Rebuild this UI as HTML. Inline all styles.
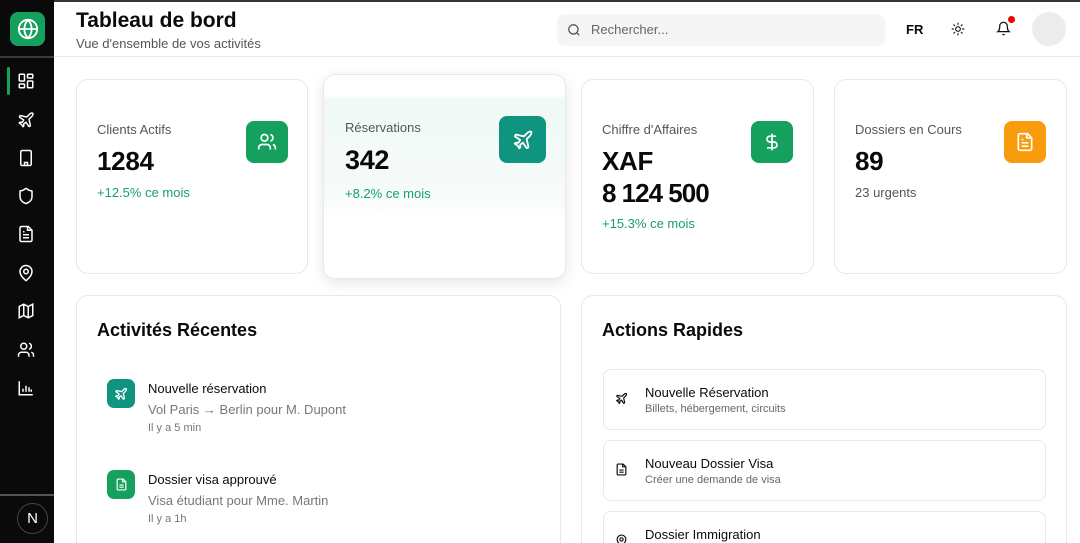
<!DOCTYPE html>
<html style="width:1080px;height:543px;overflow:hidden"><head><meta charset="utf-8"><style>
*{box-sizing:border-box;margin:0;padding:0}
body{width:1080px;height:543px;overflow:hidden;background:#fff;font-family:"Liberation Sans",sans-serif;color:#0a0a0a;position:relative}
.abs{position:absolute}
.side{left:0;top:0;width:54px;height:543px;background:#0a0a0a}
.ic{position:absolute;left:17px;width:18px;height:18px}
svg{display:block}
.card{position:absolute;background:#fff;border:1px solid #e8e8e8;border-radius:12px}
.lbl{position:absolute;font-size:13px;color:#555}
.num{position:absolute;font-size:26px;font-weight:bold;color:#0a0a0a;line-height:32px;letter-spacing:-0.3px}
.chg{position:absolute;font-size:13px;color:#16a06a}
.ibox{position:absolute;width:42px;height:42px;border-radius:8px;display:flex;align-items:center;justify-content:center}
.qa{position:absolute;left:21px;width:443px;height:61px;border:1px solid #e8e8e8;border-radius:8px}
.qa .t{position:absolute;left:41px;top:15px;font-size:13px}
.qa .s{position:absolute;left:41px;top:33px;font-size:11px;color:#666}
.qa svg{position:absolute;left:11px;top:22px}
.bot{height:248px;overflow:hidden;border-bottom:none;border-radius:12px 12px 0 0}
</style></head><body>
<div class="abs" style="left:0;top:0;width:1080px;height:2px;background:#333"></div>
<div class="abs side">
 <div class="abs" style="left:10px;top:12px;width:35px;height:34px;background:#16a05e;border-radius:8px;display:flex;align-items:center;justify-content:center">
  <svg width="22" height="22" viewBox="0 0 24 24" fill="none" stroke="#fff" stroke-width="2" stroke-linecap="round"><circle cx="12" cy="12" r="10"/><path d="M12 2a14.5 14.5 0 0 0 0 20 14.5 14.5 0 0 0 0-20M2 12h20"/></svg>
 </div>
 <div class="abs" style="left:0;top:56px;width:54px;height:2px;background:#3a3a3a"></div>
 <div class="abs" style="left:7px;top:67px;width:3px;height:28px;background:#16a05e;border-radius:2px"></div>
 <svg class="ic" style="top:72px" viewBox="0 0 24 24" fill="none" stroke="#fff" stroke-width="2"><rect x="3" y="3" width="7" height="9" rx="1"/><rect x="14" y="3" width="7" height="5" rx="1"/><rect x="14" y="12" width="7" height="9" rx="1"/><rect x="3" y="16" width="7" height="5" rx="1"/></svg>
 <svg class="ic" style="top:111px" viewBox="0 0 24 24" fill="none" stroke="#fff" stroke-width="2" stroke-linejoin="round"><path d="M17.8 19.2 16 11l3.5-3.5C21 6 21.5 4 21 3c-1-.5-3 0-4.5 1.5L13 8 4.8 6.2c-.5-.1-.9.1-1.1.5l-.3.5c-.2.5-.1 1 .3 1.3L9 12l-2 3H4l-1 1 3 2 2 3 1-1v-3l3-2 3.5 5.3c.3.4.8.5 1.3.3l.5-.2c.4-.3.6-.7.5-1.2z"/></svg>
 <svg class="ic" style="top:149px" viewBox="0 0 24 24" fill="none" stroke="#fff" stroke-width="2"><rect x="5" y="2" width="14" height="20" rx="2"/><path d="M10 22v-4h4v4M9 6h.01M12 6h.01M15 6h.01M9 10h.01M12 10h.01M15 10h.01M9 14h.01M12 14h.01M15 14h.01"/></svg>
 <svg class="ic" style="top:187px" viewBox="0 0 24 24" fill="none" stroke="#fff" stroke-width="2"><path d="M20 13c0 5-3.5 7.5-7.7 9a1 1 0 0 1-.7 0C7.5 20.5 4 18 4 13V6a1 1 0 0 1 1-1c2 0 4.5-1.2 6.2-2.7a1.2 1.2 0 0 1 1.6 0C14.5 3.8 17 5 19 5a1 1 0 0 1 1 1z"/></svg>
 <svg class="ic" style="top:225px" viewBox="0 0 24 24" fill="none" stroke="#fff" stroke-width="2"><path d="M15 2H6a2 2 0 0 0-2 2v16a2 2 0 0 0 2 2h12a2 2 0 0 0 2-2V7z"/><path d="M14 2v5h5M10 9H8M16 13H8M16 17H8"/></svg>
 <svg class="ic" style="top:264px" viewBox="0 0 24 24" fill="none" stroke="#fff" stroke-width="2"><path d="M20 10c0 5-5.5 10.2-7.4 11.8a1 1 0 0 1-1.2 0C9.5 20.2 4 15 4 10a8 8 0 0 1 16 0"/><circle cx="12" cy="10" r="3"/></svg>
 <svg class="ic" style="top:302px" viewBox="0 0 24 24" fill="none" stroke="#fff" stroke-width="2"><path d="M3 6l6-3 6 3 6-3v15l-6 3-6-3-6 3zM9 3v15M15 6v15"/></svg>
 <svg class="ic" style="top:341px" viewBox="0 0 24 24" fill="none" stroke="#fff" stroke-width="2"><path d="M16 21v-2a4 4 0 0 0-4-4H6a4 4 0 0 0-4 4v2"/><circle cx="9" cy="7" r="4"/><path d="M22 21v-2a4 4 0 0 0-3-3.9M16 3.1a4 4 0 0 1 0 7.8"/></svg>
 <svg class="ic" style="top:379px" viewBox="0 0 24 24" fill="none" stroke="#fff" stroke-width="2"><path d="M3 3v18h18M8 17v-4M12 17V9M16 17v-6M19 17v-3"/></svg>
 <div class="abs" style="left:0;top:494px;width:54px;height:2px;background:#555"></div>
 <div class="abs" style="left:17px;top:503px;width:31px;height:31px;border-radius:50%;border:1px solid #444;color:#fff;font-size:15px;text-align:center;line-height:29px">N</div>
</div>
<div class="abs" style="left:54px;top:56px;width:1026px;height:1px;background:#e8e8e8"></div>
<div class="abs" style="left:76px;top:9px;font-size:21px;font-weight:bold">Tableau de bord</div>
<div class="abs" style="left:76px;top:36px;font-size:13px;color:#555">Vue d'ensemble de vos activités</div>
<div class="abs" style="left:557px;top:14px;width:328px;height:32px;background:#f5f5f5;border-radius:8px">
 <svg class="abs" style="left:10px;top:9px" width="14" height="14" viewBox="0 0 24 24" fill="none" stroke="#444" stroke-width="2"><circle cx="11" cy="11" r="8"/><path d="m21 21-4.3-4.3"/></svg>
 <div class="abs" style="left:34px;top:8px;font-size:13px;color:#666">Rechercher...</div>
</div>
<div class="abs" style="left:906px;top:22px;font-size:13px;font-weight:bold">FR</div>
<svg class="abs" style="left:951px;top:22px" width="14" height="14" viewBox="0 0 24 24" fill="none" stroke="#111" stroke-width="2" stroke-linecap="round"><circle cx="12" cy="12" r="4"/><path d="M12 2v2M12 20v2M4.9 4.9l1.4 1.4M17.7 17.7l1.4 1.4M2 12h2M20 12h2M6.3 17.7l-1.4 1.4M19.1 4.9l-1.4 1.4"/></svg>
<svg class="abs" style="left:996px;top:21px" width="15" height="15" viewBox="0 0 24 24" fill="none" stroke="#111" stroke-width="2"><path d="M6 8a6 6 0 0 1 12 0c0 7 3 9 3 9H3s3-2 3-9M10.3 21a1.9 1.9 0 0 0 3.4 0"/></svg>
<div class="abs" style="left:1008px;top:16px;width:7px;height:7px;border-radius:50%;background:#e00"></div>
<div class="abs" style="left:1032px;top:12px;width:34px;height:34px;border-radius:50%;background:#ececec"></div>

<div class="card" style="left:76px;top:79px;width:232px;height:195px">
 <div class="lbl" style="left:20px;top:42px">Clients Actifs</div>
 <div class="num" style="left:20px;top:65px">1284</div>
 <div class="chg" style="left:20px;top:105px">+12.5% ce mois</div>
 <div class="ibox" style="left:169px;top:41px;background:#16a05e"><svg width="20" height="20" viewBox="0 0 24 24" fill="none" stroke="#fff" stroke-width="2"><path d="M16 21v-2a4 4 0 0 0-4-4H6a4 4 0 0 0-4 4v2"/><circle cx="9" cy="7" r="4"/><path d="M22 21v-2a4 4 0 0 0-3-3.9M16 3.1a4 4 0 0 1 0 7.8"/></svg></div>
</div>
<div class="card" style="left:323px;top:74px;width:243px;height:205px;box-shadow:0 4px 14px rgba(0,0,0,.1);background:linear-gradient(180deg,#fff 10%,#f0f9f6 12%,#f6fbf9 60%,#fff 72%)">
 <div class="lbl" style="left:21px;top:45px">Réservations</div>
 <div class="num" style="left:21px;top:69px;font-size:27px">342</div>
 <div class="chg" style="left:21px;top:111px">+8.2% ce mois</div>
 <div class="ibox" style="left:175px;top:41px;width:47px;height:47px;background:#0f9480"><svg width="22" height="22" viewBox="0 0 24 24" fill="none" stroke="#fff" stroke-width="2" stroke-linejoin="round"><path d="M17.8 19.2 16 11l3.5-3.5C21 6 21.5 4 21 3c-1-.5-3 0-4.5 1.5L13 8 4.8 6.2c-.5-.1-.9.1-1.1.5l-.3.5c-.2.5-.1 1 .3 1.3L9 12l-2 3H4l-1 1 3 2 2 3 1-1v-3l3-2 3.5 5.3c.3.4.8.5 1.3.3l.5-.2c.4-.3.6-.7.5-1.2z"/></svg></div>
</div>
<div class="card" style="left:581px;top:79px;width:233px;height:195px">
 <div class="lbl" style="left:20px;top:42px">Chiffre d'Affaires</div>
 <div class="num" style="left:20px;top:65px">XAF<br><span style="letter-spacing:-1px">8 124 500</span></div>
 <div class="chg" style="left:20px;top:136px">+15.3% ce mois</div>
 <div class="ibox" style="left:169px;top:41px;background:#16a05e"><svg width="20" height="20" viewBox="0 0 24 24" fill="none" stroke="#fff" stroke-width="2"><path d="M12 2v20M17 5H9.5a3.5 3.5 0 0 0 0 7h5a3.5 3.5 0 0 1 0 7H6"/></svg></div>
</div>
<div class="card" style="left:834px;top:79px;width:233px;height:195px">
 <div class="lbl" style="left:20px;top:42px">Dossiers en Cours</div>
 <div class="num" style="left:20px;top:65px">89</div>
 <div class="lbl" style="left:20px;top:105px">23 urgents</div>
 <div class="ibox" style="left:169px;top:41px;background:#f89c0e"><svg width="20" height="20" viewBox="0 0 24 24" fill="none" stroke="#fff" stroke-width="2"><path d="M15 2H6a2 2 0 0 0-2 2v16a2 2 0 0 0 2 2h12a2 2 0 0 0 2-2V7z"/><path d="M14 2v5h5M10 9H8M16 13H8M16 17H8"/></svg></div>
</div>

<div class="card bot" style="left:76px;top:295px;width:485px">
 <div class="abs" style="left:20px;top:24px;font-size:18px;font-weight:bold">Activités Récentes</div>
 <div class="abs" style="left:30px;top:83px;width:28px;height:29px;border-radius:7px;background:#0f9480;display:flex;align-items:center;justify-content:center"><svg width="14" height="14" viewBox="0 0 24 24" fill="none" stroke="#fff" stroke-width="2.2" stroke-linejoin="round"><path d="M17.8 19.2 16 11l3.5-3.5C21 6 21.5 4 21 3c-1-.5-3 0-4.5 1.5L13 8 4.8 6.2c-.5-.1-.9.1-1.1.5l-.3.5c-.2.5-.1 1 .3 1.3L9 12l-2 3H4l-1 1 3 2 2 3 1-1v-3l3-2 3.5 5.3c.3.4.8.5 1.3.3l.5-.2c.4-.3.6-.7.5-1.2z"/></svg></div>
 <div class="abs" style="left:71px;top:85px;font-size:13px">Nouvelle réservation</div>
 <div class="abs" style="left:71px;top:106px;font-size:13px;color:#777">Vol Paris → Berlin pour M. Dupont</div>
 <div class="abs" style="left:71px;top:126px;font-size:11px;color:#777">Il y a 5 min</div>
 <div class="abs" style="left:30px;top:174px;width:28px;height:29px;border-radius:7px;background:#16a05e;display:flex;align-items:center;justify-content:center"><svg width="13" height="13" viewBox="0 0 24 24" fill="none" stroke="#fff" stroke-width="2.2"><path d="M15 2H6a2 2 0 0 0-2 2v16a2 2 0 0 0 2 2h12a2 2 0 0 0 2-2V7z"/><path d="M14 2v5h5M16 13H8M16 17H8"/></svg></div>
 <div class="abs" style="left:71px;top:176px;font-size:13px">Dossier visa approuvé</div>
 <div class="abs" style="left:71px;top:197px;font-size:13px;color:#777">Visa étudiant pour Mme. Martin</div>
 <div class="abs" style="left:71px;top:217px;font-size:11px;color:#777">Il y a 1h</div>
</div>
<div class="card bot" style="left:581px;top:295px;width:486px">
 <div class="abs" style="left:20px;top:24px;font-size:18px;font-weight:bold">Actions Rapides</div>
 <div class="qa" style="top:73px"><svg width="13" height="13" viewBox="0 0 24 24" fill="none" stroke="#111" stroke-width="2.2" stroke-linejoin="round"><path d="M17.8 19.2 16 11l3.5-3.5C21 6 21.5 4 21 3c-1-.5-3 0-4.5 1.5L13 8 4.8 6.2c-.5-.1-.9.1-1.1.5l-.3.5c-.2.5-.1 1 .3 1.3L9 12l-2 3H4l-1 1 3 2 2 3 1-1v-3l3-2 3.5 5.3c.3.4.8.5 1.3.3l.5-.2c.4-.3.6-.7.5-1.2z"/></svg><div class="t">Nouvelle Réservation</div><div class="s">Billets, hébergement, circuits</div></div>
 <div class="qa" style="top:144px"><svg width="13" height="13" viewBox="0 0 24 24" fill="none" stroke="#111" stroke-width="2.2"><path d="M15 2H6a2 2 0 0 0-2 2v16a2 2 0 0 0 2 2h12a2 2 0 0 0 2-2V7z"/><path d="M14 2v5h5M16 13H8M16 17H8"/></svg><div class="t">Nouveau Dossier Visa</div><div class="s">Créer une demande de visa</div></div>
 <div class="qa" style="top:215px;height:33px;border-bottom:none;border-radius:8px 8px 0 0"><svg width="13" height="13" viewBox="0 0 24 24" fill="none" stroke="#111" stroke-width="2.2"><path d="M20 10c0 5-5.5 10.2-7.4 11.8a1 1 0 0 1-1.2 0C9.5 20.2 4 15 4 10a8 8 0 0 1 16 0"/><circle cx="12" cy="10" r="3"/></svg><div class="t" style="top:15px">Dossier Immigration</div></div>
</div>
</body></html>
